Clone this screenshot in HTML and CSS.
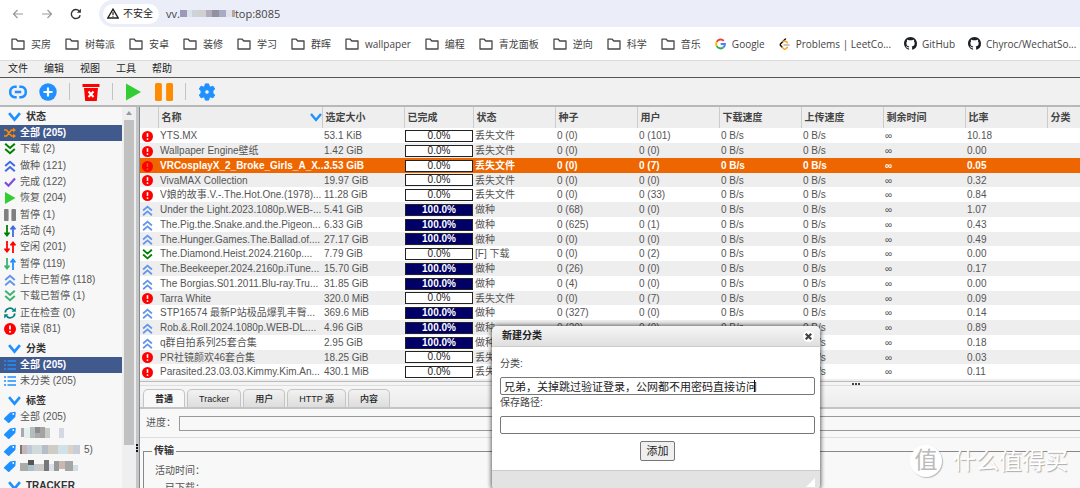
FILE: index.html
```html
<!DOCTYPE html>
<html lang="zh-CN">
<head>
<meta charset="utf-8">
<title>qBittorrent Web UI</title>
<link rel="stylesheet" href="styles.css">
</head>
<body>
<svg class="defs" aria-hidden="true">
  <symbol id="folder" viewBox="0 0 14 12"><path d="M1 1.2h4.2l1.6 1.8H13v8H1z" fill="none" stroke="#474747" stroke-width="1.3" stroke-linejoin="round"/></symbol>
  <symbol id="github" viewBox="0 0 16 16"><path fill="#1b1f23" d="M8 0C3.58 0 0 3.58 0 8c0 3.54 2.29 6.53 5.47 7.59.4.07.55-.17.55-.38 0-.19-.01-.82-.01-1.49-2.01.37-2.53-.49-2.69-.94-.09-.23-.48-.94-.82-1.13-.28-.15-.68-.52-.01-.53.63-.01 1.08.58 1.23.82.72 1.21 1.87.87 2.33.66.07-.52.28-.87.51-1.07-1.78-.2-3.64-.89-3.64-3.95 0-.87.31-1.59.82-2.15-.08-.2-.36-1.02.08-2.12 0 0 .67-.21 2.2.82a7.4 7.4 0 0 1 4 0c1.53-1.04 2.2-.82 2.2-.82.44 1.1.16 1.92.08 2.12.51.56.82 1.27.82 2.15 0 3.07-1.87 3.75-3.65 3.95.29.25.54.73.54 1.48 0 1.07-.01 1.93-.01 2.2 0 .21.15.46.55.38A8.01 8.01 0 0 0 16 8c0-4.42-3.58-8-8-8z"/></symbol>
  <symbol id="err" viewBox="0 0 12 12"><circle cx="6" cy="6" r="6" fill="#f00"/><path d="M6 2.4v4" stroke="#fff" stroke-width="1.7"/><circle cx="6" cy="8.8" r="1" fill="#fff"/></symbol>
  <symbol id="errsel" viewBox="0 0 12 12"><circle cx="6" cy="6" r="6" fill="#f00"/><path d="M6 2.4v4" stroke="#e60" stroke-width="1.7"/><circle cx="6" cy="8.8" r="1" fill="#e60"/></symbol>
  <symbol id="up" viewBox="0 0 12 12"><path d="M1.2 6 6 1.8 10.8 6M1.2 11.2 6 7l4.800 4.200" fill="none" stroke="currentColor" stroke-width="2"/></symbol>
  <symbol id="down" viewBox="0 0 12 12"><path d="M1.2.8 6 5l4.800-4.200M1.200 6 6 10.200 10.800 6" fill="none" stroke="currentColor" stroke-width="2"/></symbol>
  <symbol id="chev" viewBox="0 0 12 12"><path d="M1 2l5 6 5-6" fill="none" stroke="#1e90ff" stroke-width="2.4"/></symbol>
  <symbol id="shuffle" viewBox="0 0 12 12"><path d="M0 3h2.500l5 6H10M0 9h2.500l5-6H10" fill="none" stroke="#ff8c00" stroke-width="1.500"/><path d="M9 .8 12 3 9 5.200zM9 6.800 12 9l-3 2.200z" fill="#ff8c00"/></symbol>
  <symbol id="check" viewBox="0 0 12 12"><path d="M1 6.200l3.500 3.500L11 2.500" fill="none" stroke="#7d4fe0" stroke-width="2.300"/></symbol>
  <symbol id="play" viewBox="0 0 12 12"><path d="M1 0l10.500 6L1 12z" fill="#32cd32"/></symbol>
  <symbol id="pause" viewBox="0 0 12 12"><rect width="4.600" height="12" rx="1" fill="currentColor"/><rect x="7.400" width="4.600" height="12" rx="1" fill="currentColor"/></symbol>
  <symbol id="updown" viewBox="0 0 12 12"><path d="M3 0v9M.5 7.500 3 10.500l2.500-3" fill="none" stroke="var(--a)" stroke-width="1.800"/><path d="M9 12V3M6.500 4.500 9 1.500l2.500 3" fill="none" stroke="var(--b)" stroke-width="1.800"/></symbol>
  <symbol id="sync" viewBox="0 0 12 12"><path d="M1.200 5.500A4.800 4.800 0 0 1 9.500 2.800M10.800 6.500A4.800 4.800 0 0 1 2.500 9.200" fill="none" stroke="#078080" stroke-width="1.800"/><path d="M11.800.5v4.300H7.500zM.2 11.500V7.200h4.300z" fill="#078080"/></symbol>
  <symbol id="list" viewBox="0 0 12 12"><path d="M0 2h2M0 6h2M0 10h2M3.500 2H12M3.500 6H12M3.500 10H12" stroke="#1e90ff" stroke-width="1.400"/></symbol>
  <symbol id="tag" viewBox="0 0 12 12"><path d="M.3 7 6 1.500 11 .8l.8.700L11.300 6 5.300 11.700q-.6.500-1.200 0L.3 8.200q-.5-.6 0-1.200z" fill="#1e90ff"/><circle cx="9.300" cy="3" r=".9" fill="#fff"/></symbol>
</svg>

<header class="address">
  <button class="nav dim" aria-label="后退"><svg viewBox="0 0 12 12"><path d="M11 6H1.500M5.500 2l-4 4 4 4" fill="none" stroke="currentColor" stroke-width="1.200"/></svg></button>
  <button class="nav dim" aria-label="前进"><svg viewBox="0 0 12 12"><path d="M1 6h9.500M6.500 2l4 4-4 4" fill="none" stroke="currentColor" stroke-width="1.200"/></svg></button>
  <button class="nav" aria-label="刷新"><svg viewBox="0 0 12 12"><path d="M10.200 7.200A4.500 4.500 0 1 1 9.200 3" fill="none" stroke="currentColor" stroke-width="1.400"/><path d="M10.900.8v4H6.900z" fill="currentColor"/></svg></button>
  <div class="omnibox">
    <span class="insecure"><svg viewBox="0 0 12 11"><path d="M6 1.200 11.200 10H.8z" fill="none" stroke="#222" stroke-width="1.400"/><path d="M6 4v3M6 7.800v1" stroke="#222" stroke-width="1.200"/></svg>不安全</span>
    <span class="url">vv.<svg class="mask" viewBox="0 0 55 7"><rect width="7" height="7" fill="#9b98b8"/><rect x="7" width="5" height="7" fill="#dde3ec"/><rect x="12" width="7" height="7" fill="#cdd3d8"/><rect x="19" width="7" height="7" fill="#d2d0cf"/><rect x="26" width="6" height="7" fill="#b0aebc"/><rect x="32" width="7" height="7" fill="#9390a0"/><rect x="39" width="7" height="7" fill="#a8a9c2"/><rect x="46" width="6" height="7" fill="#e0e2ed"/><rect x="52" width="3" height="7" fill="#b9a59a"/></svg>top:8085</span>
  </div>
</header>

<nav class="bookmarks">
  <a href="#"><svg class="fo"><use href="#folder"/></svg>买房</a>
  <a href="#"><svg class="fo"><use href="#folder"/></svg>树莓派</a>
  <a href="#"><svg class="fo"><use href="#folder"/></svg>安卓</a>
  <a href="#"><svg class="fo"><use href="#folder"/></svg>装修</a>
  <a href="#"><svg class="fo"><use href="#folder"/></svg>学习</a>
  <a href="#"><svg class="fo"><use href="#folder"/></svg>群晖</a>
  <a href="#"><svg class="fo"><use href="#folder"/></svg>wallpaper</a>
  <a href="#"><svg class="fo"><use href="#folder"/></svg>编程</a>
  <a href="#"><svg class="fo"><use href="#folder"/></svg>青龙面板</a>
  <a href="#"><svg class="fo"><use href="#folder"/></svg>逆向</a>
  <a href="#"><svg class="fo"><use href="#folder"/></svg>科学</a>
  <a href="#"><svg class="fo"><use href="#folder"/></svg>音乐</a>
  <a href="#"><svg class="fav" viewBox="0 0 12 12" fill="none" stroke-width="2.200"><path d="M9.600 2.600A4.800 4.800 0 0 0 1.900 3.700" stroke="#ea4335"/><path d="M1.900 3.700a4.800 4.800 0 0 0 0 4.600" stroke="#fbbc05"/><path d="M1.900 8.300a4.800 4.800 0 0 0 7.400 1.300" stroke="#34a853"/><path d="M9.300 9.600A4.800 4.800 0 0 0 10.800 6H6.200" stroke="#4285f4"/></svg>Google</a>
  <a href="#"><svg class="fav" viewBox="0 0 12 13" fill="none" stroke-width="1.600" stroke-linecap="round"><path d="M7 1 1.800 6.200q-.8 1 0 2L3.500 10" stroke="#111"/><path d="M3.500 10l1.700 1.700q1.200.8 2.300 0L9 10.200M4.500 4l.8-.6q1.400-.6 2.400.3L9 5" stroke="#ffa116"/><path d="M5.500 7.500H11" stroke="#b3b3b3"/></svg>Problems | LeetCo...</a>
  <a href="#"><svg class="gh"><use href="#github"/></svg>GitHub</a>
  <a href="#"><svg class="gh"><use href="#github"/></svg>Chyroc/WechatSo...</a>
</nav>

<nav class="menubar"><a href="#">文件</a><a href="#">编辑</a><a href="#">视图</a><a href="#">工具</a><a href="#">帮助</a></nav>

<div class="toolbar">
  <button aria-label="添加链接"><svg viewBox="0 0 18 18"><path d="M7.700 3.800H5.800A4.600 4.600 0 0 0 1.300 9a4.600 4.600 0 0 0 4.500 5.200h1.900M10.300 3.800h1.900A4.600 4.600 0 0 1 16.700 9a4.600 4.600 0 0 1-4.500 5.200h-1.900M5.800 9h6.400" fill="none" stroke="#1e90ff" stroke-width="2.500"/></svg></button>
  <button class="add" aria-label="添加种子"><svg viewBox="0 0 18 18"><circle cx="9" cy="9" r="8.700" fill="#1e90ff"/><path d="M9 4.500v9M4.500 9h9" stroke="#fff" stroke-width="2.200"/></svg></button>
  <i class="sep"></i>
  <button aria-label="删除"><svg viewBox="0 0 18 18"><path d="M.5 1h17v3H.5zM2 5h14l-1.200 13H3.200z" fill="#f00"/><path d="M6.500 8.500l5 5.500M11.500 8.500l-5 5.500" stroke="#fff" stroke-width="2"/></svg></button>
  <i class="sep"></i>
  <button aria-label="恢复"><svg viewBox="0 0 18 18"><path d="M1 .5 16 9 1 17.500z" fill="#32cd32"/></svg></button>
  <button class="stop" aria-label="暂停"><svg><use href="#pause"/></svg></button>
  <i class="sep"></i>
  <button aria-label="选项"><svg viewBox="0 0 18 18"><path fill="#1e90ff" fill-rule="evenodd" stroke="#1e90ff" stroke-linejoin="round" d="M7.300.9h3.400l.5 2.400 1.400.8 2.400-.9 1.700 2.900-1.800 1.600v2.600l1.800 1.600-1.700 2.900-2.400-.9-1.400.8-.5 2.400H7.300l-.5-2.400-1.400-.8-2.400.9-1.700-2.900 1.800-1.600V7.700L1.300 6.100 3 3.200l2.400.9 1.400-.8zM9 6.700a2.300 2.300 0 1 0 0 4.600 2.300 2.300 0 0 0 0-4.600z"/></svg></button>
</div>

<div class="workspace">
  <aside class="sidebar">
    <div class="filters">
      <h2><svg><use href="#chev"/></svg>状态</h2>
      <ul>
        <li class="on"><svg><use href="#shuffle"/></svg>全部 (205)</li>
        <li><svg class="c-green"><use href="#down"/></svg>下载 (2)</li>
        <li><svg class="c-royal"><use href="#up"/></svg>做种 (121)</li>
        <li><svg><use href="#check"/></svg>完成 (122)</li>
        <li><svg><use href="#play"/></svg>恢复 (204)</li>
        <li><svg class="c-gray"><use href="#pause"/></svg>暂停 (1)</li>
        <li><svg class="ud-active"><use href="#updown"/></svg>活动 (4)</li>
        <li><svg class="ud-idle"><use href="#updown"/></svg>空闲 (201)</li>
        <li><svg class="ud-stall"><use href="#updown"/></svg>暂停 (119)</li>
        <li><svg class="c-blue"><use href="#up"/></svg>上传已暂停 (118)</li>
        <li><svg class="c-sea"><use href="#down"/></svg>下载已暂停 (1)</li>
        <li><svg><use href="#sync"/></svg>正在检查 (0)</li>
        <li><svg><use href="#err"/></svg>错误 (81)</li>
      </ul>
      <h2><svg><use href="#chev"/></svg>分类</h2>
      <ul>
        <li class="on"><svg><use href="#list"/></svg>全部 (205)</li>
        <li><svg><use href="#list"/></svg>未分类 (205)</li>
      </ul>
      <h2><svg><use href="#chev"/></svg>标签</h2>
      <ul>
        <li><svg><use href="#tag"/></svg>全部 (205)</li>
        <li><svg><use href="#tag"/></svg><svg class="blur" viewBox="0 0 60 12"><rect x="1" y="1" width="3" height="9" fill="#aaa"/><rect x="4" y="1" width="6" height="10" fill="#e4f0f0"/><rect x="10" width="5" height="11" fill="#b5bdbc"/><rect x="15" width="5" height="6" fill="#8c8c8c"/><rect x="15" y="6" width="5" height="5" fill="#aaa"/><rect x="20" width="5" height="11" fill="#a3a3a3"/><rect x="25" y="1" width="5" height="10" fill="#c9cbcb"/><rect x="39" y="1" width="5" height="10" fill="#d4d8e2"/></svg></li>
        <li><svg><use href="#tag"/></svg><svg class="blur" viewBox="0 0 60 12"><rect y="1" width="2" height="9" fill="#777"/><rect x="2" y="1" width="5" height="9" fill="#c8b5b5"/><rect x="7" y="1" width="5" height="9" fill="#bdc9d6"/><rect x="12" y="1" width="10" height="9" fill="#cfdbd8"/><rect x="22" y="1" width="6" height="9" fill="#b7bcc9"/><rect x="28" y="1" width="10" height="9" fill="#cfcbc5"/><rect x="38" y="1" width="10" height="9" fill="#cfe2ea"/><rect x="48" y="1" width="5" height="9" fill="#ddd2c5"/><rect x="53" y="1" width="9" height="9" fill="#c8cdda"/></svg><span>5)</span></li>
        <li><svg><use href="#tag"/></svg><svg class="blur" viewBox="0 0 60 12"><rect y="3" width="8" height="8" fill="#aaa"/><rect x="8" width="6" height="5" fill="#555"/><rect x="8" y="5" width="6" height="6" fill="#a9c1cb"/><rect x="14" y="4" width="10" height="7" fill="#c9c9c9"/><rect x="24" width="5" height="11" fill="#777"/><rect x="29" y="4" width="5" height="7" fill="#dfdfe8"/><rect x="34" y="1" width="5" height="10" fill="#999"/><rect x="39" y="1" width="6" height="8" fill="#c9b8b0"/><rect x="45" y="1" width="8" height="10" fill="#a5a5a5"/><rect x="53" y="5" width="5" height="6" fill="#cfe0e4"/></svg></li>
      </ul>
      <h2><svg><use href="#chev"/></svg>TRACKER</h2>
    </div>
    <div class="scroll"><i class="arrow"></i><i class="thumb"></i></div>
  </aside>
  <div class="vsplit"><i></i></div>

  <main class="content">
    <section class="torrents">
      <table>
        <colgroup><col class="w-ico"><col class="w-name"><col class="w-std"><col class="w-done"><col class="w-std"><col class="w-std"><col class="w-std"><col class="w-std"><col class="w-std"><col class="w-std"><col class="w-std"><col></colgroup>
        <thead><tr><th></th><th><span class="sorted">名称<svg><use href="#chev"/></svg></span></th><th>选定大小</th><th>已完成</th><th>状态</th><th>种子</th><th>用户</th><th>下载速度</th><th>上传速度</th><th>剩余时间</th><th>比率</th><th>分类</th></tr></thead>
        <tbody>
        <tr><td><svg><use href="#err"/></svg></td><td>YTS.MX</td><td>53.1 KiB</td><td><div class="bar">0.0%</div></td><td>丢失文件</td><td>0 (0)</td><td>0 (101)</td><td>0 B/s</td><td>0 B/s</td><td>∞</td><td>10.18</td><td></td></tr>
        <tr><td><svg><use href="#err"/></svg></td><td>Wallpaper Engine壁纸</td><td>1.42 GiB</td><td><div class="bar">0.0%</div></td><td>丢失文件</td><td>0 (0)</td><td>0 (0)</td><td>0 B/s</td><td>0 B/s</td><td>∞</td><td>0.00</td><td></td></tr>
        <tr class="picked"><td><svg><use href="#errsel"/></svg></td><td>VRCosplayX_2_Broke_Girls_A_X...</td><td>3.53 GiB</td><td><div class="bar">0.0%</div></td><td>丢失文件</td><td>0 (0)</td><td>0 (7)</td><td>0 B/s</td><td>0 B/s</td><td>∞</td><td>0.05</td><td></td></tr>
        <tr><td><svg><use href="#err"/></svg></td><td>VivaMAX Collection</td><td>19.97 GiB</td><td><div class="bar">0.0%</div></td><td>丢失文件</td><td>0 (0)</td><td>0 (0)</td><td>0 B/s</td><td>0 B/s</td><td>∞</td><td>0.32</td><td></td></tr>
        <tr><td><svg><use href="#err"/></svg></td><td>V娘的故事.V.-.The.Hot.One.(1978)...</td><td>11.28 GiB</td><td><div class="bar">0.0%</div></td><td>丢失文件</td><td>0 (0)</td><td>0 (33)</td><td>0 B/s</td><td>0 B/s</td><td>∞</td><td>0.84</td><td></td></tr>
        <tr><td><svg class="c-blue"><use href="#up"/></svg></td><td>Under the Light.2023.1080p.WEB-...</td><td>5.41 GiB</td><td><div class="bar full">100.0%</div></td><td>做种</td><td>0 (68)</td><td>0 (0)</td><td>0 B/s</td><td>0 B/s</td><td>∞</td><td>1.07</td><td></td></tr>
        <tr><td><svg class="c-blue"><use href="#up"/></svg></td><td>The.Pig.the.Snake.and.the.Pigeon...</td><td>6.33 GiB</td><td><div class="bar full">100.0%</div></td><td>做种</td><td>0 (625)</td><td>0 (1)</td><td>0 B/s</td><td>0 B/s</td><td>∞</td><td>0.43</td><td></td></tr>
        <tr><td><svg class="c-blue"><use href="#up"/></svg></td><td>The.Hunger.Games.The.Ballad.of....</td><td>27.17 GiB</td><td><div class="bar full">100.0%</div></td><td>做种</td><td>0 (0)</td><td>0 (0)</td><td>0 B/s</td><td>0 B/s</td><td>∞</td><td>0.49</td><td></td></tr>
        <tr><td><svg class="c-green"><use href="#down"/></svg></td><td>The.Diamond.Heist.2024.2160p....</td><td>7.79 GiB</td><td><div class="bar">0.0%</div></td><td>[F] 下载</td><td>0 (0)</td><td>0 (2)</td><td>0 B/s</td><td>0 B/s</td><td>∞</td><td>0.00</td><td></td></tr>
        <tr><td><svg class="c-blue"><use href="#up"/></svg></td><td>The.Beekeeper.2024.2160p.iTune...</td><td>15.70 GiB</td><td><div class="bar full">100.0%</div></td><td>做种</td><td>0 (26)</td><td>0 (0)</td><td>0 B/s</td><td>0 B/s</td><td>∞</td><td>0.17</td><td></td></tr>
        <tr><td><svg class="c-blue"><use href="#up"/></svg></td><td>The Borgias.S01.2011.Blu-ray.Tru...</td><td>31.85 GiB</td><td><div class="bar full">100.0%</div></td><td>做种</td><td>0 (4)</td><td>0 (0)</td><td>0 B/s</td><td>0 B/s</td><td>∞</td><td>0.00</td><td></td></tr>
        <tr><td><svg><use href="#err"/></svg></td><td>Tarra White</td><td>320.0 MiB</td><td><div class="bar">0.0%</div></td><td>丢失文件</td><td>0 (0)</td><td>0 (7)</td><td>0 B/s</td><td>0 B/s</td><td>∞</td><td>0.09</td><td></td></tr>
        <tr><td><svg class="c-blue"><use href="#up"/></svg></td><td>STP16574 最新P站极品爆乳丰臀...</td><td>369.6 MiB</td><td><div class="bar full">100.0%</div></td><td>做种</td><td>0 (327)</td><td>0 (0)</td><td>0 B/s</td><td>0 B/s</td><td>∞</td><td>0.14</td><td></td></tr>
        <tr><td><svg class="c-blue"><use href="#up"/></svg></td><td>Rob.&amp;.Roll.2024.1080p.WEB-DL....</td><td>4.96 GiB</td><td><div class="bar full">100.0%</div></td><td>做种</td><td>0 (20)</td><td>0 (0)</td><td>0 B/s</td><td>0 B/s</td><td>∞</td><td>0.89</td><td></td></tr>
        <tr><td><svg class="c-blue"><use href="#up"/></svg></td><td>q群自拍系列25套合集</td><td>2.95 GiB</td><td><div class="bar full">100.0%</div></td><td>做种</td><td></td><td></td><td></td><td>0 B/s</td><td>∞</td><td>0.18</td><td></td></tr>
        <tr><td><svg><use href="#err"/></svg></td><td>PR社镜颜欢46套合集</td><td>18.25 GiB</td><td><div class="bar">0.0%</div></td><td>丢失文件</td><td></td><td></td><td></td><td>0 B/s</td><td>∞</td><td>0.03</td><td></td></tr>
        <tr><td><svg><use href="#err"/></svg></td><td>Parasited.23.03.03.Kimmy.Kim.An...</td><td>430.1 MiB</td><td><div class="bar">0.0%</div></td><td>丢失文件</td><td></td><td></td><td></td><td>0 B/s</td><td>∞</td><td>0.11</td><td></td></tr>
        <tr><td></td><td></td><td></td><td><div class="bar"></div></td><td></td><td></td><td></td><td></td><td></td><td></td><td></td><td></td></tr>
        </tbody>
      </table>
    </section>
    <div class="hsplit"><i></i></div>
    <section class="details">
      <div class="tabs"><button class="current">普通</button><button>Tracker</button><button>用户</button><button>HTTP 源</button><button>内容</button></div>
      <div class="progress"><span>进度：</span><div class="track"></div></div>
      <fieldset><legend>传输</legend><div class="stats"><span>活动时间：</span><span>已下载：</span></div></fieldset>
    </section>
  </main>
</div>

<form class="dialog" role="dialog" aria-labelledby="dlg-title">
  <div class="dlg-head"><strong id="dlg-title">新建分类</strong><button type="button" class="close" aria-label="关闭"><svg viewBox="0 0 10 10"><path d="M2.500 2.500l5 5M7.500 2.500l-5 5" stroke="#444" stroke-width="2"/></svg></button></div>
  <div class="dlg-body">
    <label for="cat">分类:</label>
    <div class="field"><input id="cat" type="text" value="兄弟，关掉跳过验证登录，公网都不用密码直接访问"><i class="caret"></i></div>
    <label for="path" class="second">保存路径:</label>
    <div class="field"><input id="path" type="text"></div>
    <button type="button" class="submit">添加</button>
  </div>
  <div class="dlg-foot"><i></i></div>
</form>

<div class="watermark"><span class="badge">值</span><span class="brand">什么值得买</span></div>
</body>
</html>
```

FILE: styles.css
```css
* { box-sizing: border-box; }
body {
  margin: 0;
  height: 100vh;
  display: flex;
  flex-direction: column;
  position: relative;
  overflow: hidden;
  background: #fff;
  color: #555;
  font: 10px/14px "Liberation Sans", "Noto Sans CJK SC", sans-serif;
}
button { font: inherit; color: inherit; border: 0; padding: 0; background: none; }
a { color: inherit; text-decoration: none; }
h2, ul { margin: 0; padding: 0; }
svg { flex: none; display: block; }
.defs { position: absolute; width: 0; height: 0; }
.c-green { color: #008000; }
.c-royal { color: #4169e1; }
.c-blue { color: #6495ed; }
.c-sea { color: #3cb371; }
.c-gray { color: #808080; }
.ud-active { --a: #008000; --b: #4169e1; }
.ud-idle { --a: #f00; --b: #f00; }
.ud-stall { --a: #3cb371; --b: #1e90ff; }

/* Browser chrome */
.address { flex: none; display: flex; align-items: center; height: 27px; padding-left: 12px; gap: 17px; color: #333; }
.nav { width: 12px; height: 12px; }
.nav svg { width: 12px; height: 12px; }
.dim { color: #999; }
.omnibox {
  flex: 1;
  display: flex;
  align-items: center;
  gap: 7px;
  height: 27px;
  padding-left: 4px;
  background: #ebeef8;
  border-radius: 14px 0 0 14px;
}
.insecure { display: flex; align-items: center; gap: 4px; height: 20px; padding: 0 6px 0 4px; background: #fff; border-radius: 10px; color: #222; }
.insecure svg { width: 12px; height: 11px; }
.url { display: flex; align-items: center; font: 11px/16px "Open Sans", "Noto Sans CJK SC", sans-serif; color: #444; }
.mask { width: 55px; height: 7px; }
.bookmarks {
  flex: none;
  display: flex;
  align-items: center;
  gap: 14px;
  height: 34px;
  padding-left: 11px;
  overflow: hidden;
  border-bottom: 1px solid #dcdcdc;
  color: #444;
  font: 10px/14px "Open Sans", "Noto Sans CJK SC", sans-serif;
  white-space: nowrap;
}
.bookmarks a { display: flex; align-items: center; gap: 6px; }
.fo { width: 14px; height: 12px; }
.fav { width: 11px; height: 12px; }
.gh { width: 13px; height: 13px; }
.bookmarks a:nth-child(n+15) { gap: 5px; margin-left: -1px; }

/* Application menus */
.menubar { flex: none; display: flex; align-items: center; gap: 16px; height: 17px; padding-left: 8px; background: #f0f0f0; border-bottom: 1px solid #555; color: #222; }
.toolbar { flex: none; display: flex; align-items: center; height: 29px; padding-left: 9px; gap: 12px; background: #f1f1f1; border-bottom: 2px solid #b8b8b8; }
.toolbar button, .toolbar svg { width: 18px; height: 18px; }
.toolbar .stop { color: #ff8c00; }
.sep { width: 1px; height: 17px; background: #c4c4c4; }

.workspace { flex: 1; min-height: 0; display: flex; }
.sidebar { width: 136px; display: flex; background: #f7f7f7; overflow: hidden; }
.filters { flex: 1; }
.filters h2 { display: flex; align-items: center; gap: 5px; height: 20px; padding: 4px 0 0 8px; font-size: 10px; color: #333; }
.filters h2:first-child { height: 18px; padding-top: 2px; }
.filters svg { width: 12px; height: 12px; }
.filters h2 svg { width: 13px; height: 13px; }
.filters li { display: flex; align-items: center; gap: 4px; height: 16px; padding-left: 4px; white-space: nowrap; }
.filters li:nth-child(3n) { height: 17px; }
.filters li.on { background: #415a8e; color: #fff; font-weight: bold; }
.filters .blur { width: 60px; height: 12px; }
.scroll { width: 14px; display: flex; flex-direction: column; align-items: center; padding-bottom: 43px; background: #efefef; }
.arrow { margin: 4px 0 5px; border: 3px solid transparent; border-top: 0; border-bottom: 4px solid #999; }
.thumb { flex: 1; width: 10px; background: #c1c1c1; }
.vsplit { width: 4px; display: flex; align-items: center; background: #c3c7ca; border-right: 1px solid #888; }
.vsplit i { width: 2px; height: 8px; margin-top: 300px; border-left: 2px dotted #111; }

/* Torrent list */
.content { flex: 1; min-width: 0; display: flex; flex-direction: column; }
.torrents { flex: 1; min-height: 0; overflow: hidden; }
table { width: 100%; table-layout: fixed; border-collapse: collapse; }
.w-ico { width: 18px; }
.w-name { width: 164px; }
.w-std { width: 82px; }
.w-done { width: 69px; }
th { height: 21px; padding: 0 0 0 3px; text-align: left; background: #eee; border-right: 1px solid #ccc; color: #444; }
th:last-child { border-right: 0; }
.sorted { display: flex; align-items: center; justify-content: space-between; }
.sorted svg { width: 12px; height: 12px; }
td { padding: 0 0 0 2px; line-height: 13px; white-space: nowrap; }
td svg { width: 11px; height: 11px; margin-top: 1px; }
tbody tr { height: 15px; }
tbody tr:nth-child(4n) { height: 14px; }
tbody tr:nth-child(even) { background: #eee; }
tbody tr.picked { background: #e60; color: #fff; font-weight: bold; }
td:nth-child(4) { padding: 0 0 0 1px; }
.bar { height: 12px; border: 1px solid #222; background: #fff; color: #222; line-height: 10px; text-align: center; font-weight: normal; }
.bar.full { background: #006; color: #fff; font-weight: bold; }
.hsplit { flex: none; height: 5px; display: flex; justify-content: center; align-items: center; background: #f4f4f4; border-top: 1px solid #bbb; border-bottom: 1px solid #ddd; }
.hsplit i { width: 8px; margin-left: 491px; border-top: 2px dotted #444; }

/* Detail panel */
.details { flex: none; height: 102px; overflow: hidden; background: #f8f8f8; }
.tabs { display: flex; align-items: flex-end; gap: 2px; height: 23px; padding-left: 3px; background: linear-gradient(#f6f6f6, #ececec); border-bottom: 2px solid #c4c4c4; }
.tabs button { height: 18px; padding: 0 11px; border: 1px solid #c4c4c4; border-bottom: 0; border-radius: 5px 5px 0 0; background: linear-gradient(#f2f2f2, #ddd); color: #222; font-size: 9px; font-weight: 500; }
.tabs .current { background: #f8f8f8; font-weight: bold; }
.progress { display: flex; align-items: center; height: 29px; padding-left: 6px; gap: 3px; border-bottom: 1px solid #ddd; }
.track { flex: 1; height: 15px; border: 1px solid #999; border-right: 0; }
.details fieldset { margin: 6px 0 0 3px; padding: 6px 11px; height: 60px; border: 1px solid #888; border-right: 0; }
.details legend { margin-left: -3px; padding: 0 2px; color: #333; font-weight: bold; }
.stats { display: flex; flex-direction: column; width: 50px; gap: 3px; align-items: flex-end; white-space: nowrap; }

/* New category window */
.dialog {
  position: absolute;
  left: 492px;
  bottom: -2px;
  width: 328px;
  overflow: hidden;
  border-radius: 5px;
  background: #fff;
  box-shadow: 0 0 4px 1px rgba(0, 0, 0, .6);
  color: #444;
}
.dlg-head { display: flex; align-items: center; justify-content: space-between; height: 21px; padding: 0 6px 0 10px; background: linear-gradient(#f6f6f6, #dfdfdf); border-bottom: 1px solid #ccc; color: #222; }
.close { width: 11px; height: 11px; border-radius: 50%; background: #fff; }
.close svg { width: 11px; height: 11px; }
.dlg-body { display: flex; flex-direction: column; padding: 8px 5px 9px 8px; }
.field { position: relative; }
.field input { display: block; width: 100%; height: 18px; margin: 0; padding: 0 3px; border: 1px solid #777; border-radius: 2px; background: #fff; color: #222; font: 11px/16px "Liberation Sans", "Noto Sans CJK SC", sans-serif; }
.dlg-body label { height: 22px; line-height: 17px; }
.dlg-body label.second { height: 21px; line-height: 15px; }
.caret { position: absolute; left: 254px; top: 3px; width: 1px; height: 12px; background: #111; }
.submit { align-self: center; width: 35px; height: 20px; margin-top: 7px; border: 1px solid #777; border-radius: 2px; background: #efefef; color: #222; font-size: 11px; }
.dlg-foot { display: flex; justify-content: flex-end; align-items: flex-end; height: 20px; padding: 3px 5px; background: #e3e3e3; border-top: 1px solid #ccc; }
.dlg-foot i { border-left: 9px solid transparent; border-bottom: 9px solid #fff; }

.watermark { position: absolute; right: 12px; bottom: 11px; display: flex; align-items: center; gap: 11px; color: #fff; }
.badge { width: 32px; height: 32px; border-radius: 50%; background: #fff; color: #bbb; box-shadow: 1px 1px 1px #bbb; font-size: 23px; line-height: 31px; text-align: center; }
.brand { font-size: 23px; line-height: 30px; text-shadow: 1px 1px 1px #aaa; }
```
